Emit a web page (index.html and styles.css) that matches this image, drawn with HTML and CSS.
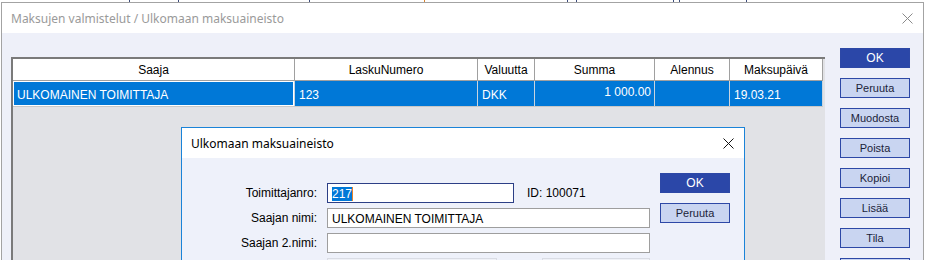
FILE: index.html
```html
<!DOCTYPE html>
<html>
<head>
    <title>Maksujen valmistelut</title>
    <link rel="stylesheet" href="styles.css">
</head>
<body>
    <!-- edge of the window behind -->
    <div class="back-strip">
        <span class="tick" style="width:129px"></span>
        <span class="tick" style="width:48px"></span>
        <span class="tick" style="width:130px"></span>
        <span class="tick orange" style="width:114px"></span>
        <span class="tick" style="width:142px"></span>
        <span class="tick" style="width:8px"></span>
        <span class="tick" style="width:96px"></span>
        <span class="tick" style="width:5px"></span>
        <span class="tick" style="width:66px"></span>
    </div>

    <div class="window">
        <div class="titlebar">
            <span class="title inactive">Maksujen valmistelut / Ulkomaan maksuaineisto</span>
            <svg class="close-x" width="11" height="11" viewBox="0 0 11 11">
                <path d="M0.5 0.5 L10.5 10.5 M10.5 0.5 L0.5 10.5" stroke="#8a8a8a" stroke-width="1" fill="none"/>
            </svg>
        </div>
        <div class="win-body">
            <div class="grid-panel">
                <table class="pay-table">
                    <thead>
                        <tr>
                            <th class="c-saaja">Saaja</th>
                            <th class="c-lasku">LaskuNumero</th>
                            <th class="c-val">Valuutta</th>
                            <th class="c-summa">Summa</th>
                            <th class="c-ale">Alennus</th>
                            <th class="c-pvm">Maksupäivä</th>
                        </tr>
                    </thead>
                    <tbody>
                        <tr class="selected">
                            <td class="focus">ULKOMAINEN TOIMITTAJA</td>
                            <td>123</td>
                            <td>DKK</td>
                            <td class="num">1 000.00</td>
                            <td></td>
                            <td>19.03.21</td>
                        </tr>
                    </tbody>
                </table>
            </div>
            <div class="side-buttons">
                <button class="btn primary">OK</button>
                <button class="btn">Peruuta</button>
                <button class="btn">Muodosta</button>
                <button class="btn">Poista</button>
                <button class="btn">Kopioi</button>
                <button class="btn">Lisää</button>
                <button class="btn">Tila</button>
                <button class="btn"></button>
            </div>
        </div>
    </div>

    <!-- modal dialog on top -->
    <div class="dialog">
        <div class="titlebar dlg-title">
            <span class="title">Ulkomaan maksuaineisto</span>
            <svg class="close-x" width="11" height="11" viewBox="0 0 11 11">
                <path d="M0.5 0.5 L10.5 10.5 M10.5 0.5 L0.5 10.5" stroke="#111" stroke-width="1" fill="none"/>
            </svg>
        </div>
        <div class="dlg-body">
            <div class="form">
                <div class="row">
                    <label>Toimittajanro:</label>
                    <div class="field short focused"><span class="sel">217</span><span class="caret"></span></div>
                    <span class="id-text">ID: 100071</span>
                </div>
                <div class="row">
                    <label>Saajan nimi:</label>
                    <div class="field">ULKOMAINEN TOIMITTAJA</div>
                </div>
                <div class="row">
                    <label>Saajan 2.nimi:</label>
                    <div class="field"></div>
                </div>
                <div class="row">
                    <label></label>
                    <div class="field faded w1"></div>
                    <div class="field faded w2"></div>
                </div>
            </div>
            <div class="dlg-buttons">
                <button class="btn primary">OK</button>
                <button class="btn">Peruuta</button>
            </div>
        </div>
    </div>
</body>
</html>
```

FILE: styles.css
```css
body {
    margin: 0;
    padding: 0;
    width: 925px;
    height: 260px;
    overflow: hidden;
    background-color: #fff;
    font-family: "Liberation Sans", Arial, sans-serif;
    font-size: 12px;
    color: #000;
    position: relative;
}

.back-strip {
    height: 2px;
    display: flex;
    overflow: hidden;
}
.tick {
    height: 2px;
    border-right: 1px solid #3a4a7a;
    flex: none;
}
.tick.orange {
    border-right-color: #d9822b;
}

/* main window */
.window {
    margin-left: 1px;
    width: 921px;
    height: 300px;
    border: 1px solid #a3a3a3;
    border-bottom: none;
    background-color: #eef0f9;
}

.titlebar {
    height: 30px;
    background-color: #fff;
    display: flex;
    align-items: center;
    justify-content: space-between;
    padding: 0 9px 0 9px;
}
.title {
    font-family: "Noto Sans", "Open Sans", sans-serif;
    font-size: 12px;
    color: #000;
}
.title.inactive {
    color: #9a9a9a;
}
.titlebar .close-x {
    margin-right: 1px;
}

.win-body {
    display: flex;
    padding: 24px 0 0 9px;
}

.grid-panel {
    width: 812px;
    height: 220px;
    border-top: 2px solid #7a7a7a;
    border-left: 2px solid #7a7a7a;
    background-color: #e1e2e6;
}

.pay-table {
    border-collapse: collapse;
    table-layout: fixed;
    width: 810px;
}
.pay-table th {
    background-color: #fff;
    font-weight: normal;
    height: 21px;
    padding: 0;
    text-align: center;
    border-right: 1px solid #a0a0a0;
    border-bottom: 1px solid #a0a0a0;
}
.pay-table .c-saaja { width: 281px; }
.pay-table .c-lasku { width: 182px; }
.pay-table .c-val { width: 56px; }
.pay-table .c-summa { width: 119px; }
.pay-table .c-ale { width: 74px; }
.pay-table .c-pvm { width: 92px; }

.pay-table td {
    height: 21px;
    padding: 2px 3px 0 4px;
    border-right: 1px solid #c9d4df;
    border-bottom: 1px solid #c8c8c8;
    white-space: nowrap;
    overflow: hidden;
}
.selected td {
    background-color: #0078d7;
    color: #fff;
}
.selected td.focus {
    box-shadow: inset 0 0 0 1px #fff;
}
.selected td.num {
    text-align: right;
    vertical-align: top;
    padding-top: 4px;
}

.side-buttons {
    display: flex;
    flex-direction: column;
    gap: 10px;
    margin: -9px 0 0 15px;
}

.btn {
    width: 70px;
    height: 20px;
    padding: 0;
    border: 1px solid #2d48a6;
    background-color: #c9d5f1;
    color: #1b1e3a;
    font-family: "Liberation Sans", Arial, sans-serif;
    font-size: 11px;
    cursor: pointer;
}
.btn.primary {
    background-color: #2b47a8;
    color: #fff;
    font-size: 12px;
}

/* dialog */
.dialog {
    position: absolute;
    left: 181px;
    top: 127px;
    width: 562px;
    height: 160px;
    border: 1px solid #1a83d8;
    background-color: #eef1fa;
}
.dlg-title {
    height: 30px;
    padding: 0 9px;
}
.dlg-title .close-x {
    margin-right: 1px;
}

.dlg-body {
    display: flex;
}

.form {
    display: flex;
    flex-direction: column;
    gap: 5px;
    padding-top: 25px;
}
.row {
    display: flex;
    align-items: center;
    height: 20px;
}
.row label {
    width: 135px;
    margin-right: 10px;
    text-align: right;
}

.field {
    box-sizing: border-box;
    width: 323px;
    height: 20px;
    border: 1px solid #9e9e9e;
    background-color: #fff;
    padding: 2px 4px 0 4px;
    display: flex;
    align-items: center;
}
.field.short {
    width: 187px;
}
.field.focused {
    border-color: #2c3f86;
}
.sel {
    background-color: #0078d7;
    color: #fff;
}
.caret {
    width: 1px;
    height: 14px;
    background-color: #e8822a;
}
.field.faded {
    border-color: #d9dce4;
    background-color: #eff1f7;
}
.field.w1 {
    width: 170px;
}
.field.w2 {
    width: 108px;
    margin-left: 45px;
}

.id-text {
    margin-left: 13px;
}

.dlg-buttons {
    display: flex;
    flex-direction: column;
    gap: 10px;
    padding-top: 15px;
    margin-left: 10px;
}
```
